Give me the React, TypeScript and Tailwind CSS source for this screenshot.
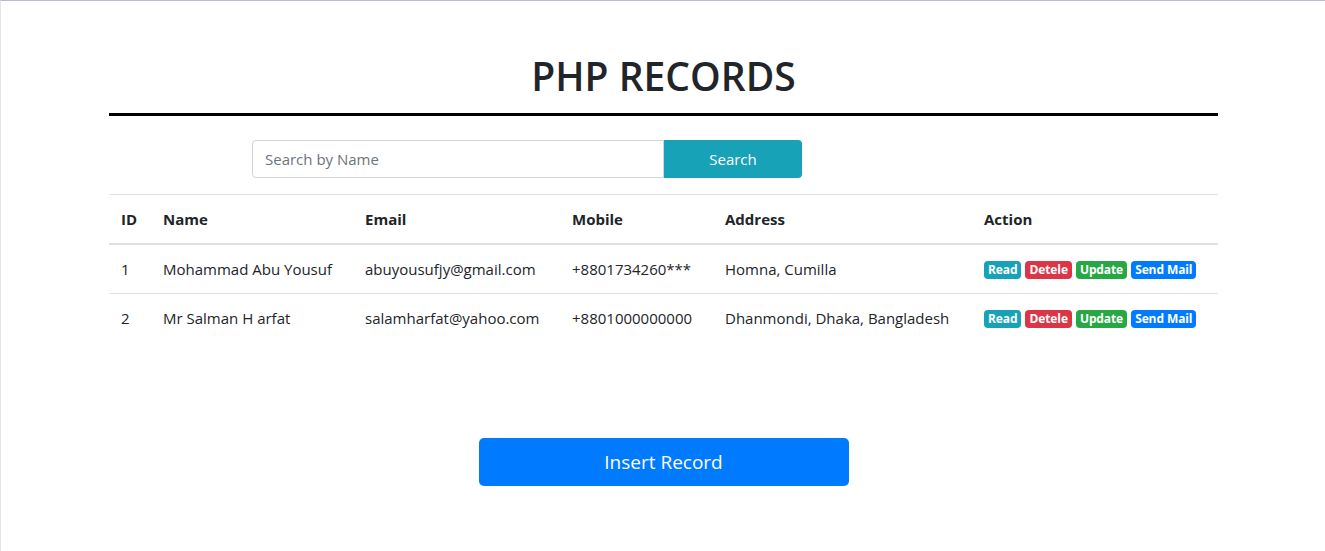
import React from "react";

const rows = [
  {
    id: 1,
    name: "Mohammad Abu Yousuf",
    email: "abuyousufjy@gmail.com",
    mobile: "+8801734260***",
    address: "Homna, Cumilla",
  },
  {
    id: 2,
    name: "Mr Salman H arfat",
    email: "salamharfat@yahoo.com",
    mobile: "+8801000000000",
    address: "Dhanmondi, Dhaka, Bangladesh",
  },
];

function Badges() {
  return (
    <div className="flex items-center gap-[4px] whitespace-nowrap pt-[1px]">
      <span className="rounded-[4px] bg-[#17a2b8] px-[4px] py-[3px] text-[12px] font-bold leading-[12px] tracking-[-0.1px] text-white">Read</span>
      <span className="rounded-[4px] bg-[#dc3545] px-[4px] py-[3px] text-[12px] font-bold leading-[12px] tracking-[-0.1px] text-white">Detele</span>
      <span className="rounded-[4px] bg-[#28a745] px-[4px] py-[3px] text-[12px] font-bold leading-[12px] tracking-[-0.1px] text-white">Update</span>
      <span className="rounded-[4px] bg-[#007bff] px-[4px] py-[3px] text-[12px] font-bold leading-[12px] tracking-[-0.1px] text-white">Send Mail</span>
    </div>
  );
}

export default function App() {
  return (
    <div
      className="h-[551px] border-t border-l border-t-[#b8bccb] border-l-[#e4e4e8] bg-white text-[#212529]"
      style={{ fontFamily: '"Open Sans", "Noto Sans", sans-serif' }}
    >
      <div className="mx-auto w-[1110px] pl-[1px]">
        <h1 className="pt-[51px] text-center text-[39px] font-semibold leading-[48px]">PHP RECORDS</h1>
        <div className="mt-[13px] h-[3px] bg-black" />
        <div className="mt-[24px] flex pl-[143px]">
          <input
            className="h-[38px] w-[412px] rounded-l-[4px] border border-[#ced4da] px-[12px] text-[15px] placeholder:text-[#6c757d] outline-none"
            placeholder="Search by Name"
          />
          <button className="h-[38px] w-[138px] rounded-r-[4px] bg-[#17a2b8] text-[15px] text-white">Search</button>
        </div>
        <table className="mt-[16px] w-full table-fixed border-collapse text-left text-[15px] leading-[24px]">
          <colgroup>
            <col className="w-[42px]" />
            <col className="w-[202px]" />
            <col className="w-[207px]" />
            <col className="w-[153px]" />
            <col className="w-[259px]" />
            <col />
          </colgroup>
          <thead>
            <tr className="border-t border-[#dee2e6]">
              <th className="border-b-2 border-[#dee2e6] p-[12px] font-bold">ID</th>
              <th className="border-b-2 border-[#dee2e6] p-[12px] font-bold">Name</th>
              <th className="border-b-2 border-[#dee2e6] p-[12px] font-bold">Email</th>
              <th className="border-b-2 border-[#dee2e6] p-[12px] font-bold">Mobile</th>
              <th className="border-b-2 border-[#dee2e6] p-[12px] font-bold">Address</th>
              <th className="border-b-2 border-[#dee2e6] p-[12px] font-bold">Action</th>
            </tr>
          </thead>
          <tbody>
            {rows.map((r, i) => (
              <tr key={r.id} className={i > 0 ? "border-t border-[#dee2e6]" : ""}>
                <td className="h-[48px] p-[12px]">{r.id}</td>
                <td className="whitespace-nowrap p-[12px]">{r.name}</td>
                <td className="whitespace-nowrap p-[12px]">{r.email}</td>
                <td className="whitespace-nowrap p-[12px]">{r.mobile}</td>
                <td className="whitespace-nowrap p-[12px]">{r.address}</td>
                <td className="p-[12px]">
                  <Badges />
                </td>
              </tr>
            ))}
          </tbody>
        </table>
        <div className="mt-[96px] flex justify-center">
          <button className="h-[48px] w-[370px] rounded-[5px] bg-[#007bff] text-[19px] text-white">Insert Record</button>
        </div>
      </div>
    </div>
  );
}
